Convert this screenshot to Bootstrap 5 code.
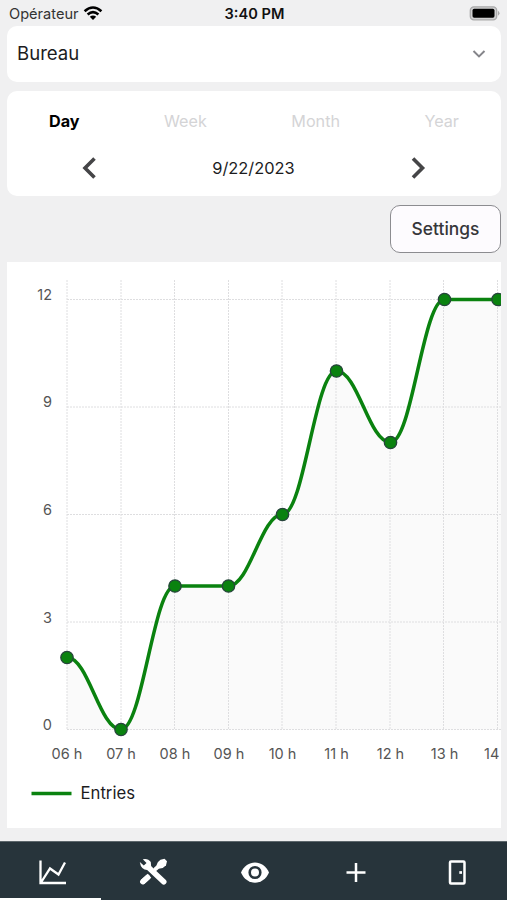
<!DOCTYPE html>
<html lang="fr">
<head>
<meta charset="utf-8">
<meta name="viewport" content="width=device-width, initial-scale=1">
<title>Bureau</title>
<link href="https://cdn.jsdelivr.net/npm/bootstrap@5.3.0/dist/css/bootstrap.min.css" rel="stylesheet">
<script src="https://cdn.jsdelivr.net/npm/bootstrap@5.3.0/dist/js/bootstrap.bundle.min.js" defer></script>
<style>
body{background:#f0f0f1;font-family:Inter,"Liberation Sans",sans-serif;color:#1c1c1e;height:900px;overflow:hidden}
svg{display:block}
.screen{height:900px}
.statusbar{height:26px;padding:1px 7px 0 9px;font-size:14.6px;line-height:26px}
.statusbar>*{flex:1 1 0}
.carrier{color:#333}
.clock{font-weight:600;font-size:14.6px;color:#111}
.panel{background:#fff;border-radius:10px;margin:0 6px 0 7px}
.picker{height:56px;padding:0 15px 0 10px;font-size:18.6px}
.period{height:105px;margin-top:9px}
.tabs{height:60px;padding:0 42px;font-size:16.2px;color:#d4d4d6}
.tabs .on{color:#000;font-weight:700}
.dates{height:34px;padding:0 75px 0 74px;font-size:16.4px}
.settings{height:48px;width:111px;margin:9px 6px 9px auto;border:1.5px solid #8c8c90;border-radius:10px;background:#fdfbfe;font-size:17.4px;font-weight:500;color:#36363a;padding:0}
.chart{margin:0 6px 0 7px;height:566px;background:#fff}
.chart text{font-size:14.5px;fill:#555}
.chart .key{font-size:16.7px;fill:#1c1c1e}
.bottom{height:59px;margin-top:13px;background:#27343b;border-top:1px solid #5d676c}
.bottom a{flex:1 1 0;display:flex;justify-content:center;padding:16px 0 0 2px;border-bottom:2px solid transparent}
.bottom a.on{border-bottom-color:#fff}
</style>
</head>
<body>
<div class="screen d-flex flex-column">
  <header class="statusbar d-flex align-items-center">
    <div class="d-flex align-items-center"><span class="carrier">Opérateur</span>
      <svg class="ms-1" width="20" height="15" viewBox="0 0 20 15" fill="none" stroke="#000" stroke-width="2.6"><path d="M1.600 5.200Q10-2.200 18.400 5.200M4.600 8.500Q10 3.900 15.400 8.500"/><path d="M10 14L6.800 10.700Q10 8.200 13.200 10.700Z" fill="#000" stroke="none"/></svg>
    </div>
    <div class="clock text-center">3:40 PM</div>
    <div class="d-flex justify-content-end">
      <svg width="31" height="15" viewBox="0 0 31 15"><rect x="1.300" y=".8" width="26.400" height="13" rx="3.600" fill="#d0d0d1" stroke="#a9a9aa" stroke-width="1.300"/><rect x="3.500" y="2.800" width="22" height="9" rx="1.700"/><path d="M29 4.800Q32 7.300 29 9.800Z" fill="#a9a9aa"/></svg>
    </div>
  </header>
  <section class="panel picker d-flex align-items-center justify-content-between flex-shrink-0">
    <span>Bureau</span>
    <svg width="14" height="10" viewBox="0 0 14 10" fill="none" stroke="#85858a" stroke-width="2"><path d="M1.500 2L7 7.400 12.500 2"/></svg>
  </section>
  <section class="panel period flex-shrink-0">
    <div class="tabs d-flex align-items-center justify-content-between">
      <span class="on">Day</span><span>Week</span><span>Month</span><span>Year</span>
    </div>
    <div class="dates d-flex align-items-center justify-content-between">
      <svg width="16" height="24" viewBox="0 0 16 24" fill="none" stroke="#454547" stroke-width="3.600"><path d="M13.500 2.500L4 12l9.500 9.500"/></svg>
      <span>9/22/2023</span>
      <svg width="16" height="24" viewBox="0 0 16 24" fill="none" stroke="#454547" stroke-width="3.600"><path d="M3 2.500L12.500 12 3 21.500"/></svg>
    </div>
  </section>
  <button class="settings flex-shrink-0" type="button">Settings</button>
  <section class="chart flex-shrink-0">
    <svg width="494" height="566" viewBox="7 262 494 566">
      <path d="M67 657.500C88.600 657.500 99.400 729.500 121 729.500C142.600 729.500 153.400 586 175 586H228.500C250.100 586 260.900 514.500 282.500 514.500C304.100 514.500 314.900 371 336.500 371C358.100 371 368.900 442.500 390.500 442.500C412.100 442.500 422.900 299.500 444.500 299.500H501V729.500H67Z" fill="#fafafa"/>
      <g stroke="#dedee0" stroke-width="1" stroke-dasharray="2 1">
        <path d="M67 299.500H501M67 407H501M67 514.500H501M67 622H501M67 729.500H501"/>
        <path d="M67 280V730M121 280V730M174.500 280V730M228.500 280V730M282 280V730M336 280V730M390 280V730M443.500 280V730M497.500 280V730"/>
      </g>
      <path d="M67 657.500C88.600 657.500 99.400 729.500 121 729.500C142.600 729.500 153.400 586 175 586H228.500C250.100 586 260.900 514.500 282.500 514.500C304.100 514.500 314.900 371 336.500 371C358.100 371 368.900 442.500 390.500 442.500C412.100 442.500 422.900 299.500 444.500 299.500H501" fill="none" stroke="#0a820f" stroke-width="3.500"/>
      <g fill="#0a820f" stroke="#27443c" stroke-width="1.300"><circle cx="67" cy="657.500" r="6.200"/><circle cx="121" cy="729.500" r="6.200"/><circle cx="175" cy="586" r="6.200"/><circle cx="228.500" cy="586" r="6.200"/><circle cx="282.500" cy="514.500" r="6.200"/><circle cx="336.500" cy="371" r="6.200"/><circle cx="390.500" cy="442.500" r="6.200"/><circle cx="444.500" cy="299.500" r="6.200"/><circle cx="498" cy="299.500" r="6.200"/></g>
      <g text-anchor="end"><text x="52" y="299.500">12</text><text x="52" y="407">9</text><text x="52" y="515">6</text><text x="52" y="622.500">3</text><text x="52" y="730">0</text></g>
      <g text-anchor="middle"><text x="67" y="759">06 h</text><text x="121" y="759">07 h</text><text x="175" y="759">08 h</text><text x="229" y="759">09 h</text><text x="282.500" y="759">10 h</text><text x="336.500" y="759">11 h</text><text x="390.500" y="759">12 h</text><text x="444.500" y="759">13 h</text></g>
      <text x="484" y="759">14</text>
      <path d="M31.500 793.500H71.500" stroke="#0a820f" stroke-width="3.500"/>
      <text class="key" x="80.500" y="799.300">Entries</text>
    </svg>
  </section>
  <nav class="bottom d-flex flex-shrink-0">
    <a class="on" href="#" aria-label="Chart"><svg width="28" height="28" viewBox="0 0 28 28" fill="none" stroke="#fff" stroke-width="2.300"><path d="M2.500 2.500V25H28M3 24.500L12 10.500 20.500 16.500 27 4.500"/></svg></a>
    <a href="#" aria-label="Tools"><svg width="28" height="28" viewBox="0 0 28 28" fill="none" stroke="#fff" stroke-linecap="round"><path d="M3.500 24L10.500 17.700" stroke-width="5.200" stroke-linecap="butt"/><path d="M3.800 23.700L8.500 19.400" stroke-width="5.400"/><path d="M16.500 11L20 8" stroke-width="4"/><path d="M17.500 8.500Q17.500 4.500 21.500 1.700L25.500 .7 28 3.300 27 7.300Q24 11 20 10.500Z" fill="#fff" stroke="none"/><path d="M9 9L24.700 23.800" stroke-width="5.600"/><path d="M.8 4L4.800 7.500 7.500 5 3.800 1.200Q9 0 11.800 4L12.200 9 8.500 12Q2 12 .8 4Z" fill="#fff" stroke="none"/></svg></a>
    <a href="#" aria-label="View"><svg width="28" height="28" viewBox="0 0 28 28"><path d="M0 14.500C5.500 1 22.500 1 28 14.500C22.500 28 5.500 28 0 14.500Z" fill="#fff"/><circle cx="14" cy="14.500" r="5.300" fill="#fff" stroke="#27343b" stroke-width="2.600"/></svg></a>
    <a href="#" aria-label="Add"><svg width="28" height="28" viewBox="0 0 28 28" fill="none" stroke="#fff" stroke-width="2.500"><path d="M14 5V24M4.500 14.500H23.500"/></svg></a>
    <a href="#" aria-label="Door"><svg width="28" height="28" viewBox="0 0 28 28" fill="none" stroke="#fff" stroke-width="2.500"><rect x="7" y="3.500" width="14.500" height="22" rx="1"/><path d="M16.300 14.500H19" stroke-width="2.700"/></svg></a>
  </nav>
</div>
</body>
</html>
